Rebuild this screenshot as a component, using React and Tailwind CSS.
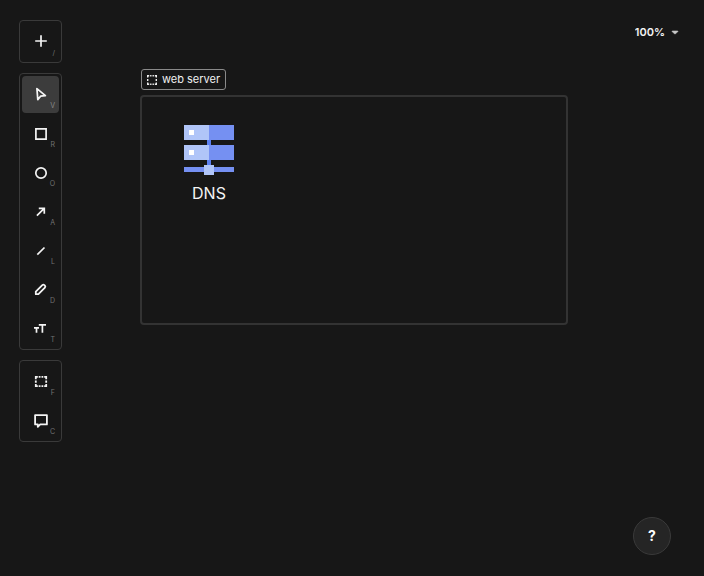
import React from "react";

function Icon({ children }) {
  return (
    <svg
      width="15"
      height="15"
      viewBox="0 0 15 15"
      fill="none"
      stroke="#f4f4f4"
      strokeWidth="1.7"
      className="overflow-visible"
      aria-hidden="true"
    >
      {children}
    </svg>
  );
}

const groups = [
  [
    {
      name: "Insert",
      shortcut: "/",
      icon: <path d="M8 1.2v11.6M2.2 7h11.6" />,
    },
  ],
  [
    {
      name: "Select",
      shortcut: "V",
      active: true,
      icon: <path d="M3.9 1.6 4.8 12.6 7.6 9.2 12.4 8.6Z" strokeLinejoin="round" strokeWidth="1.7" />,
    },
    {
      name: "Rectangle",
      shortcut: "R",
      icon: <path d="M2.9 2.9h10.2v10.2H2.9z" />,
    },
    {
      name: "Ellipse",
      shortcut: "O",
      icon: <circle cx="8" cy="8" r="5.2" />,
    },
    {
      name: "Arrow",
      shortcut: "A",
      icon: <path d="M3.9 11.7 11 4.6M5.8 4.3h5.5v5.5" />,
    },
    {
      name: "Line",
      shortcut: "L",
      icon: <path d="M4.3 11.7 11.5 4.5" />,
    },
    {
      name: "Draw",
      shortcut: "D",
      icon: (
        <path
          d="M2.8 12.2V9.6L9.3 3.1Q10.4 2.2 11.4 3.1L11.9 3.6Q12.8 4.6 11.9 5.7L5.4 12.2Z"
          strokeWidth="1.8"
          strokeLinejoin="round"
        />
      ),
    },
    {
      name: "Text",
      shortcut: "T",
      icon: <path d="M5.8 3.9H13M9.4 3.9v7.8M1 6.9h5M3.5 6.9v4.8" />,
    },
  ],
  [
    {
      name: "Frame",
      shortcut: "F",
      icon: (
        <path
          d="M2.8 5.2V2.8H4.8M11.2 2.8h2V5.2M13.2 10v2.2H11.2M4.8 12.2H2.8V10M5.7 2.8h1.8M8.5 2.8h1.8M5.7 12.2h1.8M8.5 12.2h1.8M2.8 6.4v2.4M13.2 6.4v2.4"
          strokeWidth="1.8"
        />
      ),
    },
    {
      name: "Comment",
      shortcut: "C",
      icon: (
        <path d="M2.1 2.1h11.8v9.3H7.2L4.8 13.9V11.4H2.1z" strokeLinejoin="round" strokeWidth="1.8" />
      ),
    },
  ],
];

function ToolButton({ tool }) {
  return (
    <button
      type="button"
      aria-label={tool.name}
      aria-pressed={Boolean(tool.active)}
      className={
        tool.active
          ? "relative flex size-[37px] items-center justify-center rounded bg-[#3c3c3c]"
          : "relative flex size-[37px] items-center justify-center rounded hover:bg-[#2a2a2a]"
      }
    >
      <Icon>{tool.icon}</Icon>
      <span
        className={
          tool.active
            ? "absolute right-1 bottom-1 text-[7px] leading-[7px] text-[#888888]"
            : "absolute right-1 bottom-1 text-[7px] leading-[7px] text-[#727272]"
        }
      >
        {tool.shortcut}
      </span>
    </button>
  );
}

function Toolbar() {
  return (
    <nav aria-label="Tools" className="relative z-10 flex flex-col gap-2.5">
      {groups.map((tools) => (
        <div
          key={tools[0].name}
          className="flex flex-col gap-0.5 rounded border border-[#3a3a3a] bg-[#171717] p-0.5"
        >
          {tools.map((tool) => (
            <ToolButton key={tool.name} tool={tool} />
          ))}
        </div>
      ))}
    </nav>
  );
}

function ServerShape() {
  return (
    <svg width="50" height="50" viewBox="0 0 50 50" aria-hidden="true">
      <path fill="#5b7ff0" d="M23 15h4v26h-4z" />
      <path fill="#7590f2" d="M0 0h50v15H0zM0 20h50v15H0zM0 42h50v5H0z" />
      <path fill="#b0c5f8" d="M0 0h25v15H0zM0 20h25v15H0zM20 40h10v10H20z" />
      <path fill="#ffffff" d="M5 5h5v5H5zM5 25h5v5H5z" />
    </svg>
  );
}

function Canvas() {
  return (
    <section aria-label="Canvas" className="absolute inset-0">
      <div className="absolute top-[69px] left-[141px] flex h-[21px] items-center gap-[5px] rounded-[3px] border border-[#8a8a8a] px-[5px] text-[11px] text-[#f0f0f0]">
        <svg width="10" height="10" viewBox="0 0 10 10" fill="none" stroke="#f0f0f0" strokeWidth="1.4" aria-hidden="true">
          <path d="M.7 2.4V.7h1.5M7.8.7h1.5v1.7M9.3 7.6v1.7H7.8M2.2 9.3H.7V7.6M3.1.7h1.4M5.5.7h1.4M3.1 9.3h1.4M5.5 9.3h1.4M.7 4v2M9.3 4v2" />
        </svg>
        <span>web server</span>
      </div>
      <div className="absolute top-[95px] left-[140px] h-[230px] w-[428px] rounded border-2 border-[#333333]" />
      <figure className="absolute top-[125px] left-[184px] flex flex-col items-center gap-1.5">
        <ServerShape />
        <figcaption className="text-base text-[#f4f4f4]">DNS</figcaption>
      </figure>
    </section>
  );
}

export default function App() {
  return (
    <main className="relative flex min-h-screen items-start justify-between bg-[#171717] py-5 pr-[25px] pl-[19px] font-['Inter',sans-serif] text-white">
      <Canvas />
      <Toolbar />
      <div className="relative z-10 flex h-6 items-center gap-1.5">
        <select
          aria-label="Zoom"
          className="field-sizing-content appearance-none bg-transparent text-[11px] font-semibold text-[#f4f4f4]"
        >
          <option>100%</option>
        </select>
        <svg width="8" height="5" viewBox="0 0 8 5" aria-hidden="true">
          <path d="M1.2 1h5.6v.6L4.6 3.8H3.4L1.2 1.6Z" fill="#c8c8c8" stroke="#c8c8c8" strokeWidth=".6" strokeLinejoin="round" />
        </svg>
      </div>
      <button
        type="button"
        aria-label="Help"
        className="absolute right-[33px] bottom-[21px] z-10 flex size-[38px] items-center justify-center rounded-full border border-[#3a3a3a] bg-[#252525] text-sm font-bold"
      >
        ?
      </button>
    </main>
  );
}
